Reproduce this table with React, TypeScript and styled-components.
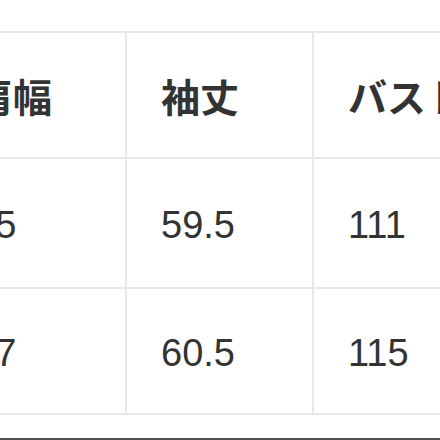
import styled, {createGlobalStyle} from 'styled-components';

const GlobalStyle = createGlobalStyle`
  html, body {
    margin:0;
    padding:0;
    background:#FFFFFF;
  }
`

interface SizeRow {
  shoulder:string;
  sleeve:string;
  bust:string;
}

const rows:SizeRow[] = [
  {shoulder:'45', sleeve:'59.5', bust:'111'},
  {shoulder:'47', sleeve:'60.5', bust:'115'},
];

export default function App(){
  return (
    <>
      <GlobalStyle />
      <Page>
        <SizeTable>
          <thead>
            <tr>
              <HeadCell>肩幅</HeadCell>
              <HeadCell>袖丈</HeadCell>
              <HeadCell>バスト</HeadCell>
            </tr>
          </thead>
          <tbody>
            {rows.map((row:SizeRow, i:number) => (
              <BodyRow key={i} tall={i === 0}>
                <ValueCell>{row.shoulder}</ValueCell>
                <ValueCell>{row.sleeve}</ValueCell>
                <ValueCell>{row.bust}</ValueCell>
              </BodyRow>
            ))}
          </tbody>
        </SizeTable>
      </Page>
    </>
  );
}

const Page = styled.div`
  width:440px;
  height:440px;
  box-sizing:border-box;
  padding-top:31px;
  overflow:hidden;
  border-bottom:2px solid #505050;
`

const SizeTable = styled.table`
  border-collapse:collapse;
  table-layout:fixed;
  margin-left:-62px;
  width:561px;
  color:#333333;
`

const HeadCell = styled.th`
  width:151px;
  height:124px;
  padding:0 0 0 34px;
  border:2px solid #E8E8E8;
  text-align:left;
  vertical-align:middle;
  font-family:"Noto Sans CJK JP", sans-serif;
  font-weight:bold;
  font-size:39px;
  white-space:nowrap;
  overflow:hidden;
`

const BodyRow = styled.tr<{tall:boolean}>`
  height:${props => props.tall ? '130px' : '126px'};
`

const ValueCell = styled.td`
  padding:4px 0 0 34px;
  border:2px solid #E8E8E8;
  text-align:left;
  vertical-align:middle;
  font-family:"Liberation Sans", Arial, sans-serif;
  font-weight:normal;
  font-size:38px;
  white-space:nowrap;
`
